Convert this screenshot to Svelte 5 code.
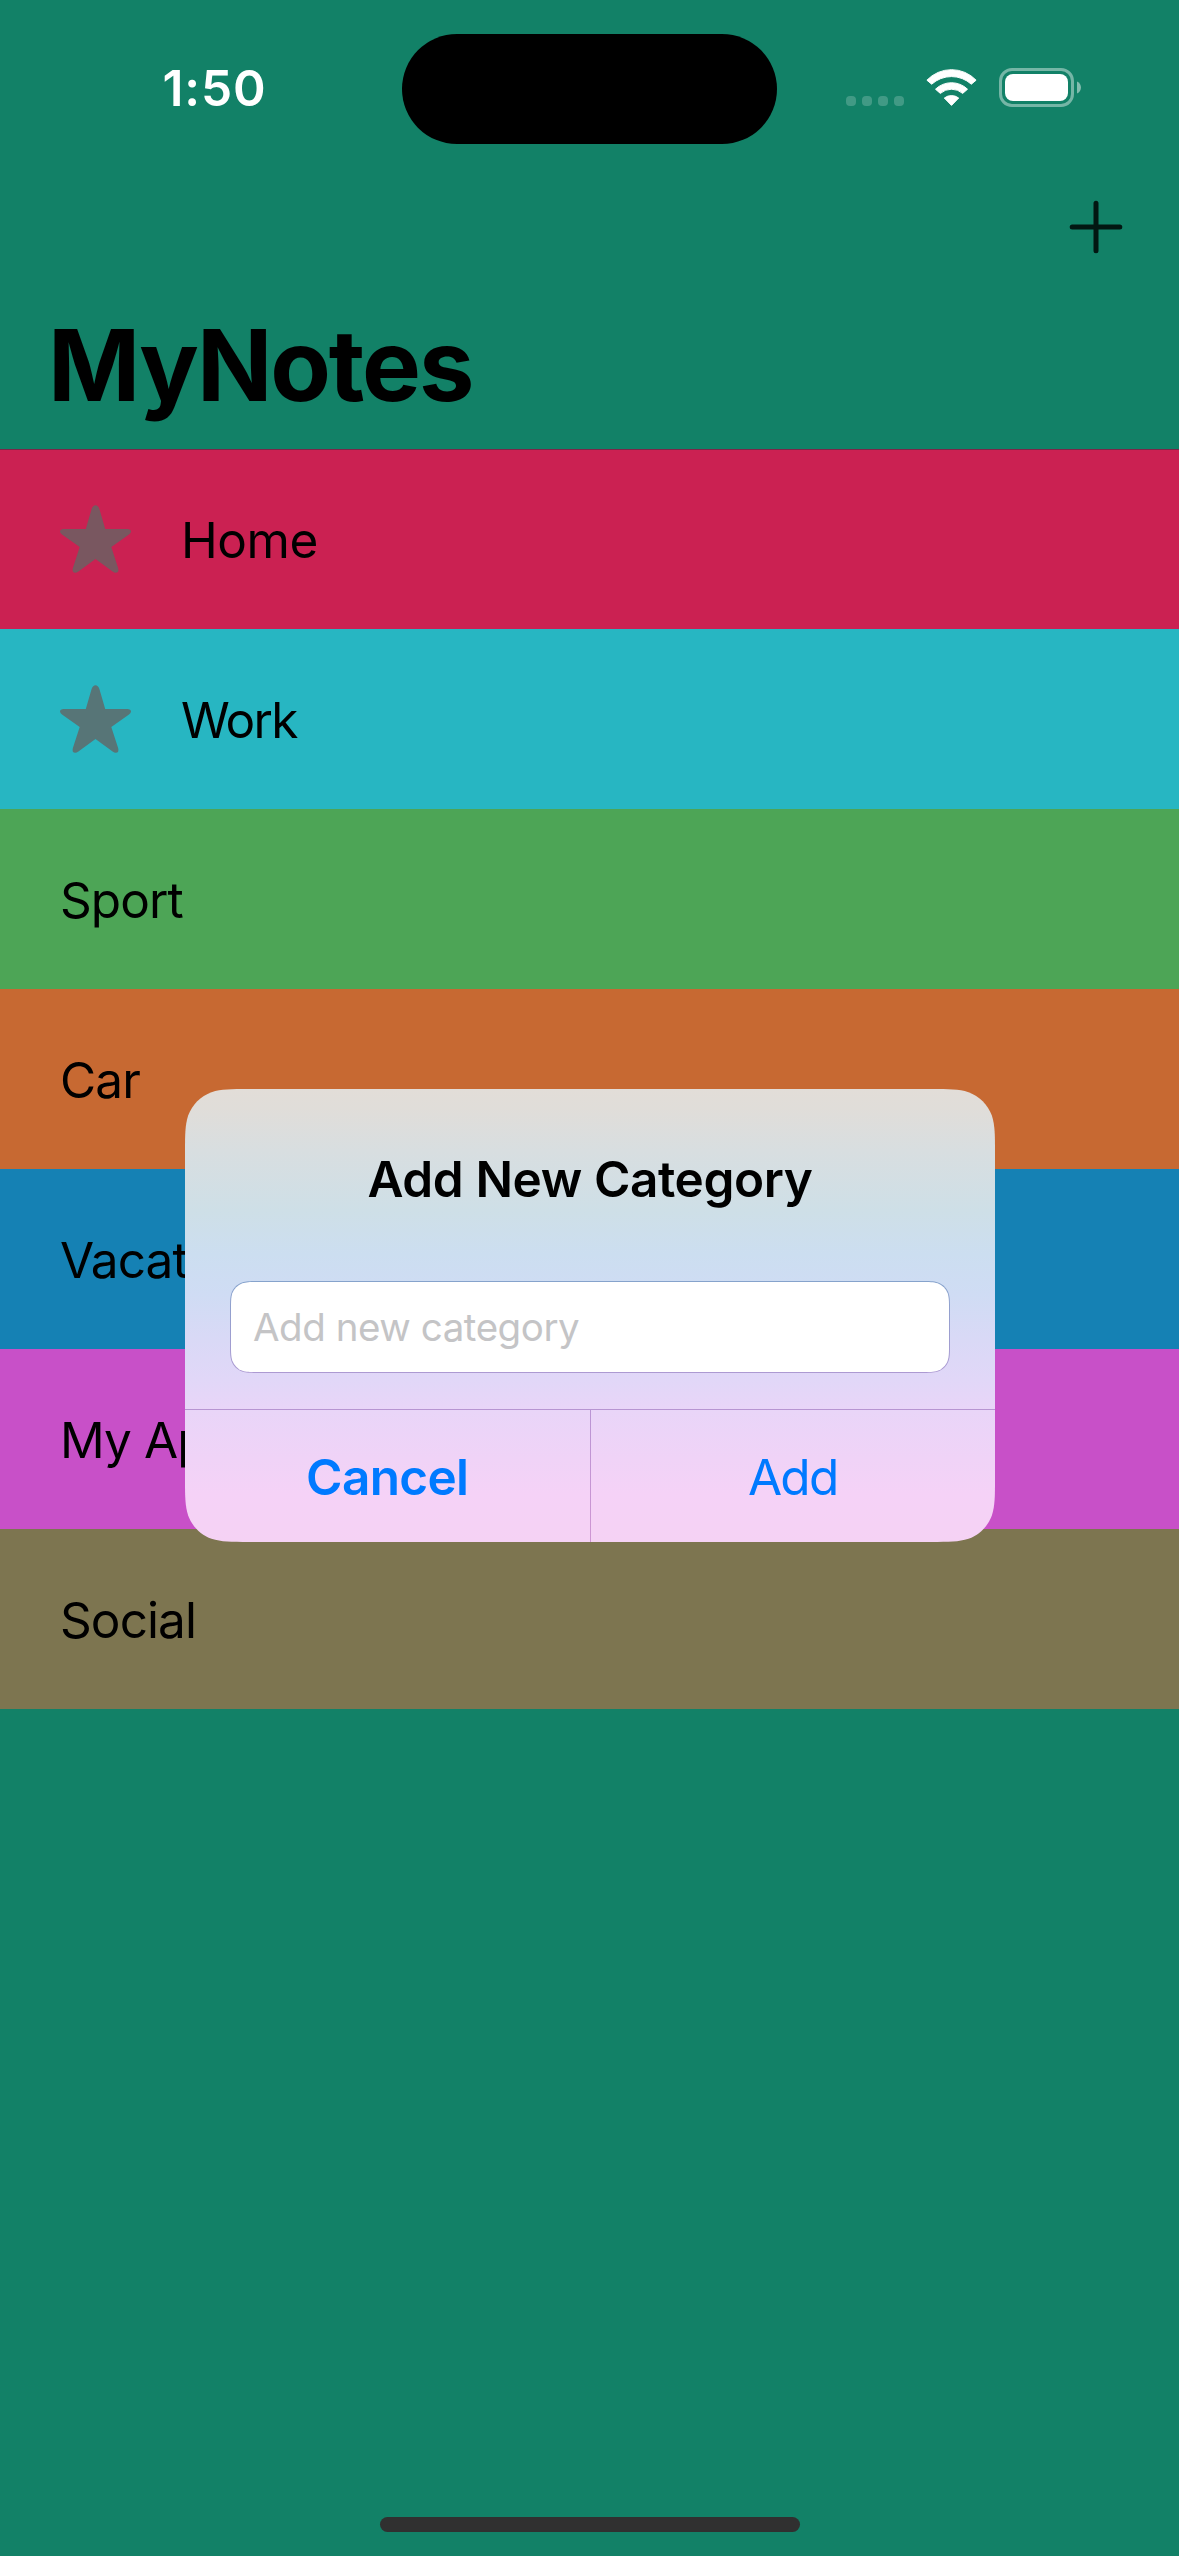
<script>
  const categories = [
    { name: 'Home', cls: 'home', star: true },
    { name: 'Work', cls: 'work', star: true },
    { name: 'Sport', cls: 'sport', star: false },
    { name: 'Car', cls: 'car', star: false },
    { name: 'Vacation', cls: 'vacation', star: false },
    { name: 'My App', cls: 'app-ideas', star: false },
    { name: 'Social', cls: 'social', star: false }
  ];

  // Rounded rectangle with continuous (smoothed) corners.
  function smooth(w, h, r) {
    const a = 1.528665 * r, b = 1.088493 * r, c = 0.868407 * r;
    const d = 0.631494 * r, e = 0.074911 * r, f = 0.372824 * r, g = 0.16906 * r;
    return `M${a} 0H${w - a}C${w - b} 0 ${w - c} 0 ${w - d} ${e}C${w - f} ${g} ${w - g} ${f} ${w - e} ${d}C${w} ${c} ${w} ${b} ${w} ${a}` +
      `V${h - a}C${w} ${h - b} ${w} ${h - c} ${w - e} ${h - d}C${w - g} ${h - f} ${w - f} ${h - g} ${w - d} ${h - e}C${w - c} ${h} ${w - b} ${h} ${w - a} ${h}` +
      `H${a}C${b} ${h} ${c} ${h} ${d} ${h - e}C${f} ${h - g} ${g} ${h - f} ${e} ${h - d}C0 ${h - c} 0 ${h - b} 0 ${h - a}` +
      `V${a}C0 ${b} 0 ${c} ${e} ${d}C${g} ${f} ${f} ${g} ${d} ${e}C${c} 0 ${b} 0 ${a} 0Z`;
  }
  const dialogShape = `clip-path: path('${smooth(810, 453, 42)}')`;
  const fieldShape = `clip-path: path('${smooth(720, 92, 19)}')`;
  const fieldInnerShape = `clip-path: path('${smooth(718, 90, 18)}')`;
</script>

<main class="screen">
  <header class="status">
    <div class="time">1:50</div>
    <div class="island"></div>
    <div class="indicators">
      <div class="dots"><i></i><i></i><i></i><i></i></div>
      <svg class="wifi" width="51" height="37" viewBox="0 0 51 37">
        <path d="M.9 11.2A34 34 0 0 1 50.1 11.2L45.3 15.2A29.5 29.5 0 0 0 5.7 15.2Z" />
        <path d="M9.5 20.2A23 23 0 0 1 41.5 20.2L36.7 24.4A17 17 0 0 0 14.3 24.4Z" />
        <path d="M18.3 29A12 12 0 0 1 32.7 29L25.5 36.4Z" />
      </svg>
      <svg class="battery" width="82" height="39" viewBox="0 0 82 39">
        <rect x="1.5" y="1.5" width="72" height="36" rx="11.5" fill="none" stroke="#fff" stroke-opacity=".42" stroke-width="3" />
        <rect x="6" y="6" width="63" height="27" rx="8" fill="#fff" />
        <path d="M78 13.5C83.3 15.5 83.3 23.5 78 25.5Z" fill="#fff" fill-opacity=".48" />
      </svg>
    </div>
  </header>

  <nav class="toolbar">
    <svg width="54" height="54" viewBox="0 0 54 54">
      <path d="M27 3.2V50.8M3.2 27H50.8" stroke="#021712" stroke-width="5" stroke-linecap="round" />
    </svg>
  </nav>

  <h1>MyNotes</h1>

  <ul class="list">
    {#each categories as c}
      <li class={c.cls}>
        {#if c.star}
          <svg class="star" width="71" height="68" viewBox="0 0 71 68">
            <path d="M25.8 24L31.6 4Q33 .3 35.5 .3Q38 .3 39.4 4L45.2 24H67.3Q71 24 71 26.6Q71 28.2 69 29.6L51.3 42L58.2 63.2Q59.2 67.8 55.8 67.8Q54.4 67.8 52.6 66.6L35.5 54L18.4 66.6Q16.6 67.8 15.2 67.8Q11.8 67.8 12.8 63.2L19.7 42L2 29.6Q0 28.2 0 26.6Q0 24 3.7 24Z" />
          </svg>
        {/if}
        <span>{c.name}</span>
      </li>
    {/each}
  </ul>

  <div class="home-indicator"></div>

  <section class="dialog" style={dialogShape}>
    <h2>Add New Category</h2>
    <div class="field" style={fieldShape}>
      <div class="field-inner" style={fieldInnerShape}>Add new category</div>
    </div>
    <div class="actions">
      <div class="action cancel">Cancel</div>
      <div class="divider"></div>
      <div class="action add">Add</div>
    </div>
  </section>
</main>

<style>
  :global(body) { margin: 0; background: #128167; }
  .screen {
    position: relative;
    display: flex;
    flex-direction: column;
    box-sizing: border-box;
    width: 1179px;
    height: 2556px;
    padding-bottom: 24px;
    overflow: hidden;
    background: #128167;
    color: #000;
    font-family: Inter, "Liberation Sans", sans-serif;
  }
  .status {
    display: grid;
    grid-template-columns: 402px 375px 402px;
    height: 177px;
    align-items: start;
  }
  .time {
    padding: 58px 0 0 162.5px;
    font-size: 49.5px;
    line-height: 60px;
    font-weight: 600;
    letter-spacing: 0.9px;
    color: #fff;
  }
  .island { height: 110.5px; margin-top: 33.5px; border-radius: 56px; background: #000; }
  .indicators { display: flex; align-items: flex-end; padding: 68px 0 0 69px; }
  .dots { display: flex; gap: 6px; padding-bottom: 1px; margin-right: 22px; }
  .dots i { width: 10px; height: 10px; border-radius: 4px; background: rgba(255, 255, 255, .2); }
  .wifi { fill: #fff; stroke: #fff; stroke-width: 1; stroke-linejoin: round; margin: 0 22px 1px 0; overflow: visible; }
  .toolbar { display: flex; justify-content: flex-end; height: 109px; padding: 23px 56px 0 0; }
  h1 {
    margin: 0;
    padding: 0 0 28px 48px;
    font-size: 99px;
    line-height: 112px;
    font-weight: 700;
    letter-spacing: -2.1px;
  }
  .list { margin: 0; padding: 0; list-style: none; }
  li {
    display: flex;
    align-items: center;
    box-sizing: border-box;
    height: 180px;
    padding: 0 60px;
    font-size: 49.5px;
    line-height: 60px;
    letter-spacing: -0.9px;
  }
  li span { padding-top: 1px; }
  .star { margin-right: 50px; fill: #795760; }
  .work .star { fill: #577577; }
  .home { background: #cb2152; box-shadow: inset 0 1px #7d2549; letter-spacing: -0.45px; }
  .work { background: #27b6c2; letter-spacing: -1.7px; }
  .sport { background: #4da556; }
  .car { background: #c76932; }
  .vacation { background: #1581b4; }
  .app-ideas { background: #c850c8; }
  .social { background: #7d7550; }
  .home-indicator { width: 420px; height: 15px; margin: auto auto 0; border-radius: 8px; background: #303030; }
  .dialog {
    position: absolute;
    left: 185px;
    top: 1089px;
    display: flex;
    flex-direction: column;
    width: 810px;
    height: 453px;
    background: linear-gradient(#e2ddd8 0, #e0ddd9 20px, #d8dee0 62px, #cedfe7 122px, #ccdef0 165px, #cfdcf4 205px, #d9d9f6 250px, #e1d7f8 290px, #e9d5f8 322px, #f0d3f7 370px, #f5d2f7 405px, #f5d2f4 453px);
  }
  h2 {
    margin: 60px 0 0;
    font-size: 49.5px;
    line-height: 60px;
    font-weight: 600;
    letter-spacing: -0.4px;
    text-align: center;
  }
  .field {
    box-sizing: border-box;
    width: 720px;
    height: 92px;
    margin: 72px auto 36px;
    padding: 1px;
    background: linear-gradient(#86a3cc, #ad9ad2);
  }
  .field-inner {
    height: 90px;
    padding-left: 22px;
    background: #fff;
    color: #c4c4c6;
    font-size: 38.5px;
    line-height: 90px;
    letter-spacing: -0.45px;
  }
  .actions { display: flex; flex: 1; border-top: 1px solid #b795d2; }
  .action { flex: 1; padding-top: 37px; text-align: center; font-size: 49.5px; line-height: 60px; color: #007aff; }
  .cancel { font-weight: 600; letter-spacing: -0.66px; }
  .add { letter-spacing: -1.7px; }
  .divider { width: 1px; background: linear-gradient(#ba95d4, #cf96d3); }
</style>
